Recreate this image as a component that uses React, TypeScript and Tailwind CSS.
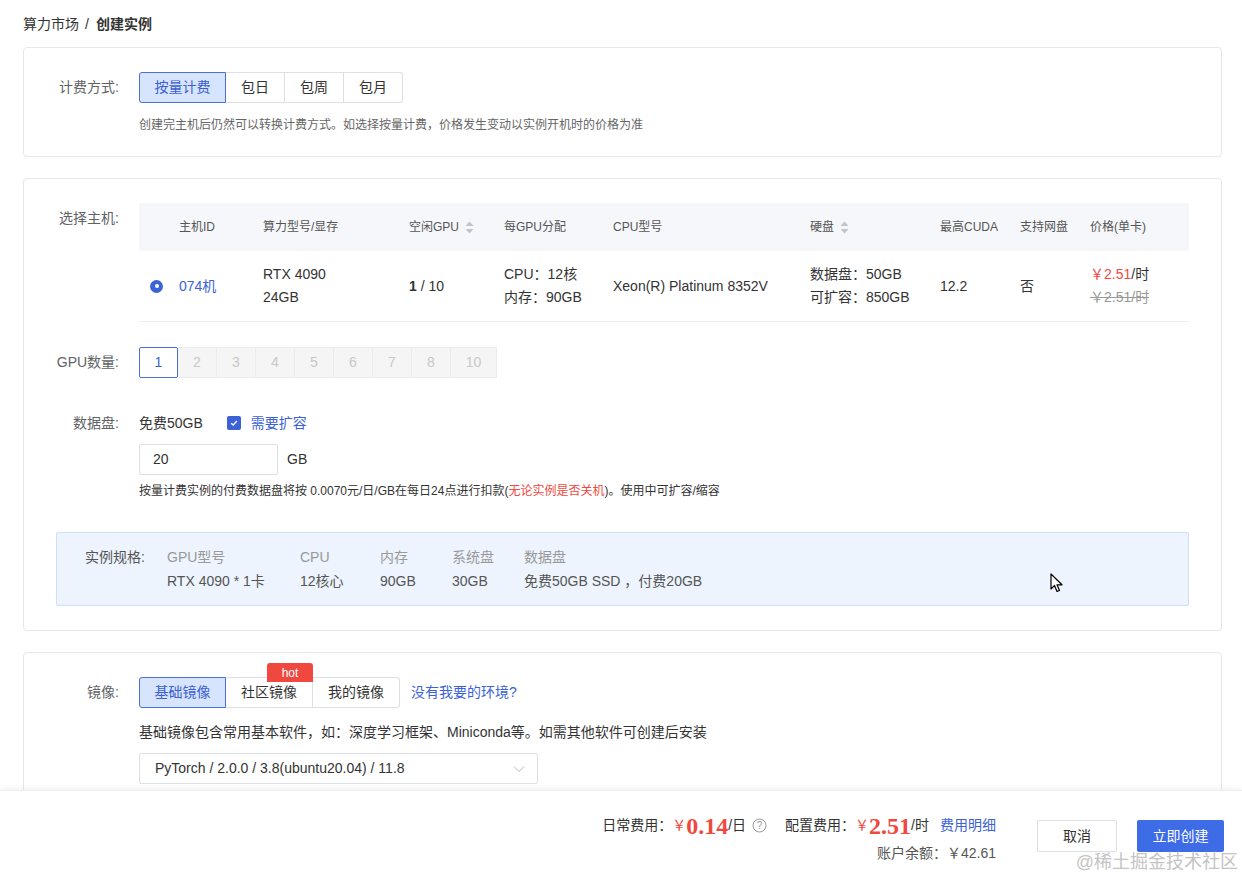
import React from "react";

const FONT = { fontFamily: '"Liberation Sans", "Noto Sans CJK SC", Arial, sans-serif' };

function SortIcon() {
  return (
    <svg width="9" height="13" viewBox="0 0 9 13" className="ml-[6px] inline-block">
      <path d="M4.5 0.5 L8.5 5 L0.5 5 Z" fill="#c0c4cc" />
      <path d="M4.5 12.5 L8.5 8 L0.5 8 Z" fill="#c0c4cc" />
    </svg>
  );
}

function Label({ children, className = "" }: { children: React.ReactNode; className?: string }) {
  return (
    <div className={`w-[95px] shrink-0 text-right text-[14px] text-[#606266] mr-[20px] ${className}`}>{children}</div>
  );
}

export default function App() {
  const gpuNums = ["1", "2", "3", "4", "5", "6", "7", "8", "10"];
  return (
    <div className="relative h-[881px] w-full overflow-hidden bg-white text-[#333]" style={FONT}>
      <div className="px-[23px] pt-[14px] pr-[20px]">
        {/* breadcrumb */}
        <div className="h-[20px] text-[14px] leading-[20px] text-[#333]">
          算力市场<span className="ml-[6px] mr-[7px]">/</span><span className="font-bold">创建实例</span>
        </div>

        {/* card 1 */}
        <div className="mt-[13px] h-[110px] rounded-[4px] border border-[#e4e7ed] pt-[24px]">
          <div className="flex items-center">
            <Label>计费方式:</Label>
            <div className="flex h-[31px] text-[14px]">
              <div className="flex w-[87px] items-center justify-center rounded-l-[3px] border border-[#4a6fd8] bg-[#d6e4fd] text-[#3b5fd0]">按量计费</div>
              <div className="flex w-[59px] items-center justify-center border-y border-r border-[#dcdfe6] text-[#333]">包日</div>
              <div className="flex w-[59px] items-center justify-center border-y border-r border-[#dcdfe6] text-[#333]">包周</div>
              <div className="flex w-[59px] items-center justify-center rounded-r-[3px] border-y border-r border-[#dcdfe6] text-[#333]">包月</div>
            </div>
          </div>
          <div className="ml-[115px] mt-[13px] text-[12px] leading-[18px] text-[#666]">
            创建完主机后仍然可以转换计费方式。如选择按量计费，价格发生变动以实例开机时的价格为准
          </div>
        </div>

        {/* card 2 */}
        <div className="mt-[21px] h-[453px] rounded-[4px] border border-[#e4e7ed] pt-[24px] pr-[32px]">
          <div className="flex">
            <Label className="pt-[5px] leading-[20px]">选择主机:</Label>
            <div className="flex-1">
              <div className="flex h-[48px] items-center bg-[#f5f7fa] text-[12px] text-[#555]">
                <div className="w-[40px]" />
                <div className="w-[84px]">主机ID</div>
                <div className="w-[146px]">算力型号/显存</div>
                <div className="flex w-[95px] items-center">空闲GPU<SortIcon /></div>
                <div className="w-[109px]">每GPU分配</div>
                <div className="w-[197px]">CPU型号</div>
                <div className="flex w-[130px] items-center">硬盘<SortIcon /></div>
                <div className="w-[80px]">最高CUDA</div>
                <div className="w-[70px]">支持网盘</div>
                <div className="flex-1">价格(单卡)</div>
              </div>
              <div className="flex h-[71px] items-center border-b border-[#ebeef5] text-[14px] leading-[23px] text-[#333]">
                <div className="flex w-[40px] pl-[11px]">
                  <div className="flex h-[13px] w-[13px] items-center justify-center rounded-full bg-[#3b62d6]">
                    <div className="h-[4px] w-[4px] rounded-full bg-white" />
                  </div>
                </div>
                <div className="w-[84px] text-[#3b62d6]">074机</div>
                <div className="w-[146px]">RTX 4090<br />24GB</div>
                <div className="w-[95px]"><span className="font-bold">1</span> / 10</div>
                <div className="w-[109px]">CPU：12核<br />内存：90GB</div>
                <div className="w-[197px]">Xeon(R) Platinum 8352V</div>
                <div className="w-[130px]">数据盘：50GB<br />可扩容：850GB</div>
                <div className="w-[80px]">12.2</div>
                <div className="w-[70px]">否</div>
                <div className="flex-1">
                  <div><span className="text-[#f0483e]">￥2.51</span>/时</div>
                  <div className="text-[#999] line-through">￥2.51/时</div>
                </div>
              </div>
            </div>
          </div>

          <div className="mt-[25px] flex items-center">
            <Label>GPU数量:</Label>
            <div className="flex h-[31px] text-[14px]">
              {gpuNums.map((n, i) =>
                i === 0 ? (
                  <div key={n} className="flex w-[39px] items-center justify-center rounded-[2px] border border-[#4a6fd8] text-[#3b5fd0]">{n}</div>
                ) : (
                  <div key={n} className={`flex ${n === "10" ? "w-[46px]" : "w-[39px]"} items-center justify-center border-y border-r border-[#ececec] bg-[#f5f5f5] text-[#c8c8c8]`}>{n}</div>
                )
              )}
            </div>
          </div>

          <div className="mt-[35px] flex items-center leading-[20px]">
            <Label>数据盘:</Label>
            <div className="flex items-center text-[14px]">
              <span className="text-[#333]">免费50GB</span>
              <div className="ml-[24px] flex h-[14px] w-[14px] items-center justify-center rounded-[2px] bg-[#3b62d6]">
                <svg width="10" height="10" viewBox="0 0 10 10"><path d="M2.2 5.2 L4.2 7.1 L7.9 3" stroke="white" strokeWidth="1.4" fill="none" /></svg>
              </div>
              <span className="ml-[10px] text-[#3b62d6]">需要扩容</span>
            </div>
          </div>
          <div className="ml-[115px] mt-[11px] flex items-center">
            <div className="flex h-[31px] w-[139px] items-center rounded-[2px] border border-[#dcdfe6] pl-[13px] text-[14px] text-[#333]">20</div>
            <span className="ml-[9px] text-[14px] text-[#333]">GB</span>
          </div>
          <div className="ml-[115px] mt-[7px] text-[12px] leading-[18px] text-[#333]">
            按量计费实例的付费数据盘将按 0.0070元/日/GB在每日24点进行扣款(<span className="text-[#f0483e]">无论实例是否关机</span>)。使用中可扩容/缩容
          </div>

          <div className="ml-[32px] mt-[32px] flex h-[74px] items-start rounded-[2px] border border-[#cfe0f3] bg-[#edf4fd] pl-[28px] pt-[12px] text-[14px] leading-[24px]">
            <div className="w-[82px] text-[#555]">实例规格:</div>
            <div className="w-[133px]">
              <div className="text-[#999]">GPU型号</div>
              <div className="text-[#555]">RTX 4090 * 1卡</div>
            </div>
            <div className="w-[80px]">
              <div className="text-[#999]">CPU</div>
              <div className="text-[#555]">12核心</div>
            </div>
            <div className="w-[72px]">
              <div className="text-[#999]">内存</div>
              <div className="text-[#555]">90GB</div>
            </div>
            <div className="w-[72px]">
              <div className="text-[#999]">系统盘</div>
              <div className="text-[#555]">30GB</div>
            </div>
            <div className="relative flex-1">
              <div className="text-[#999]">数据盘</div>
              <div className="text-[#555]">免费50GB SSD ，付费20GB</div>
              <svg className="absolute left-[526px] top-[28px]" width="14" height="20" viewBox="0 0 14 20">
                <path d="M1 1 L1 16 L4.5 12.5 L7 18.5 L9.5 17.5 L7 11.8 L12 11.8 Z" fill="white" stroke="black" strokeWidth="1.2" strokeLinejoin="round" />
              </svg>
            </div>
          </div>
        </div>

        {/* card 3 */}
        <div className="mt-[21px] h-[300px] rounded-[4px] border border-[#e4e7ed] pt-[24px]">
          <div className="flex items-center">
            <Label>镜像:</Label>
            <div className="relative flex h-[31px] text-[14px]">
              <div className="flex w-[87px] items-center justify-center rounded-l-[3px] border border-[#4a6fd8] bg-[#d6e4fd] text-[#3b5fd0]">基础镜像</div>
              <div className="flex w-[87px] items-center justify-center border-y border-r border-[#dcdfe6] text-[#333]">社区镜像</div>
              <div className="flex w-[87px] items-center justify-center rounded-r-[3px] border-y border-r border-[#dcdfe6] text-[#333]">我的镜像</div>
              <div className="absolute left-[128px] top-[-14px] flex h-[19px] w-[46px] items-center justify-center rounded-t-[3px] bg-[#f0483e] text-[12px] text-white">hot</div>
            </div>
            <span className="ml-[11px] text-[14px] text-[#3b62d6]">没有我要的环境?</span>
          </div>
          <div className="ml-[115px] mt-[14px] text-[14px] leading-[20px] text-[#333]">
            基础镜像包含常用基本软件，如：深度学习框架、Miniconda等。如需其他软件可创建后安装
          </div>
          <div className="ml-[115px] mt-[11px] flex h-[31px] w-[399px] items-center justify-between rounded-[2px] border border-[#dcdfe6] pl-[15px] pr-[12px] text-[14px] text-[#333]">
            <span>PyTorch / 2.0.0 / 3.8(ubuntu20.04) / 11.8</span>
            <svg width="12" height="8" viewBox="0 0 12 8"><path d="M1 1.5 L6 6.5 L11 1.5" stroke="#b5b9c0" strokeWidth="1" fill="none" /></svg>
          </div>
        </div>
      </div>

      {/* footer */}
      <div className="absolute bottom-0 left-0 right-0 flex h-[91px] items-center justify-end border-t border-[#eeeeee] bg-white pr-[18px] shadow-[0_-2px_6px_rgba(0,0,0,0.05)]">
        <div className="mt-[6px] flex flex-col items-end">
          <div className="flex h-[20px] items-center text-[14px] text-[#333]">
            <span>日常费用：</span>
            <span className="text-[14px] text-[#f0483e]">￥</span>
            <span className="text-[24px] font-bold leading-[20px] text-[#f0483e]" style={{ fontFamily: '"Liberation Serif", serif' }}>0.14</span>
            <span>/日</span>
            <svg className="ml-[6px]" width="15" height="15" viewBox="0 0 15 15">
              <circle cx="7.5" cy="7.5" r="6.5" stroke="#999" strokeWidth="1" fill="none" />
              <text x="7.5" y="11" textAnchor="middle" fontSize="10" fill="#999" fontFamily="Liberation Sans, sans-serif">?</text>
            </svg>
            <span className="ml-[18px]">配置费用：</span>
            <span className="text-[14px] text-[#f0483e]">￥</span>
            <span className="text-[24px] font-bold leading-[20px] text-[#f0483e]" style={{ fontFamily: '"Liberation Serif", serif' }}>2.51</span>
            <span>/时</span>
            <span className="ml-[11px] text-[#3b62d6]">费用明细</span>
          </div>
          <div className="mt-[7px] text-[14px] leading-[20px] text-[#555]">账户余额：￥42.61</div>
        </div>
        <div className="ml-[41px] flex h-[32px] w-[80px] items-center justify-center rounded-[2px] border border-[#dcdfe6] text-[14px] text-[#333]">取消</div>
        <div className="ml-[20px] flex h-[32px] w-[87px] items-center justify-center rounded-[2px] bg-[#3e6be6] text-[14px] text-white">立即创建</div>
        <div className="pointer-events-none absolute bottom-[8px] right-[4px] text-[18px] leading-[22px] text-[#c4c4c4] [text-shadow:0_0_2px_white]">@稀土掘金技术社区</div>
      </div>
    </div>
  );
}
